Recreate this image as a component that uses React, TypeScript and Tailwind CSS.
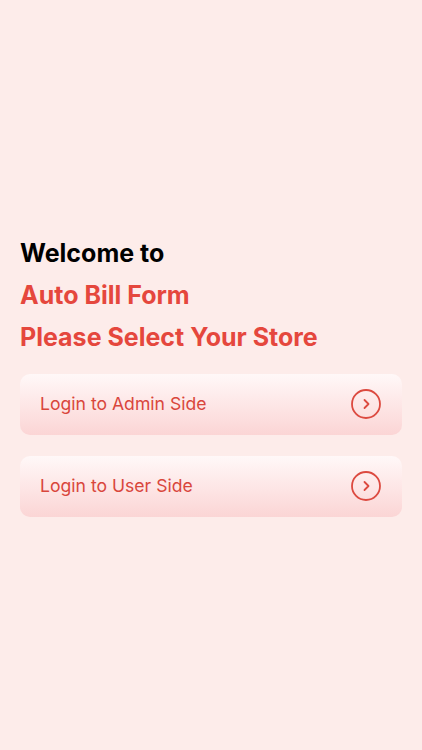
import React from "react";

const options = ["Login to Admin Side", "Login to User Side"];

function ChevronCircle() {
  return (
    <svg width="32" height="32" viewBox="0 0 32 32" fill="none">
      <circle cx="16" cy="16" r="14" stroke="#dc4a40" strokeWidth="1.8" />
      <path d="M14.5 12 L18.5 16 L14.5 20" stroke="#dc4a40" strokeWidth="1.8" strokeLinecap="round" strokeLinejoin="round" />
    </svg>
  );
}

export default function App() {
  return (
    <div
      className="min-h-screen w-full bg-[#fdecea] flex flex-col justify-center px-5 pb-[2px]"
      style={{ fontFamily: "Inter, 'Noto Sans', sans-serif" }}
    >
      {/* Heading */}
      <div className="flex flex-col">
        <h1 className="text-[25px] leading-[42px] font-bold text-black">Welcome to</h1>
        <h2 className="text-[25px] leading-[42px] font-bold text-[#e5473d]">Auto Bill Form</h2>
        <h2 className="text-[25px] leading-[42px] font-bold text-[#e5473d]">Please Select Your Store</h2>
      </div>

      {/* Options */}
      <div className="mt-4 flex flex-col gap-[21px]">
        {options.map((label) => (
          <button
            key={label}
            className="h-[61px] w-full rounded-[10px] bg-gradient-to-b from-[#fff8f8] to-[#fbd5d5] flex items-center justify-between pl-5 pr-[20px] text-left"
          >
            <span className="text-[17.6px] text-[#d9463c]">{label}</span>
            <ChevronCircle />
          </button>
        ))}
      </div>
    </div>
  );
}
